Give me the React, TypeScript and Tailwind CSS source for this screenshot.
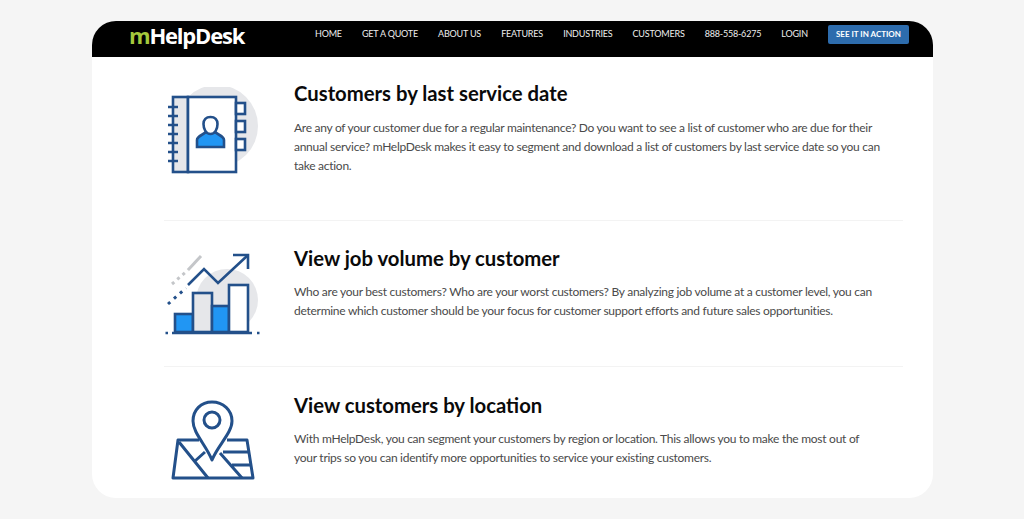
const body = "font-['Lato',sans-serif]";

function AddressBook() {
  return (
    <svg width="100" height="94" viewBox="0 0 100 94" fill="none" stroke="#23508a" strokeWidth="2.6">
      <circle cx="53" cy="39" r="41" fill="#e6e7ea" stroke="none" />
      <rect x="9" y="10" width="15" height="75" fill="#e6e7ea" />
      <rect x="24" y="10" width="48" height="75" fill="#fff" />
      <rect x="72" y="16" width="9" height="11" fill="#fff" />
      <rect x="72" y="34" width="9" height="11" fill="#fff" />
      <rect x="72" y="52" width="9" height="11" fill="#fff" />
      {[20, 29, 38, 47, 56, 65, 74].map((y) => (
        <path key={y} d={`M4 ${y}H14`} />
      ))}
      <path d="M33 60V53C33 49 39 48 42 45H51C54 48 60 49 60 53V60Z" fill="#2196f3" />
      <path d="M46.500 30C42 30 39.500 33 39.500 37C39.500 42 42 47 46.500 47C51 47 53.500 42 53.500 37C53.500 33 51 30 46.500 30Z" fill="#fff" />
    </svg>
  );
}

function Chart() {
  return (
    <svg width="100" height="94" viewBox="0 0 100 94" fill="none" stroke="#23508a" strokeWidth="2.6">
      <circle cx="63" cy="55" r="31" fill="#e6e7ea" stroke="none" />
      <path d="M4 59L22 43" strokeDasharray="3 5" strokeWidth="3" />
      <path d="M8 39L24 25" stroke="#c4c6c9" strokeWidth="3" strokeDasharray="3 4" />
      <path d="M24 25L37 11" stroke="#c4c6c9" strokeWidth="3" />
      <path d="M24 40L40 24L54 38L83 11" />
      <path d="M69 10H84V24" />
      <rect x="11" y="69" width="18" height="18" fill="#2196f3" />
      <rect x="29" y="48" width="19" height="39" fill="#e6e7ea" />
      <rect x="48" y="61" width="17" height="26" fill="#2196f3" />
      <rect x="65" y="40" width="19" height="47" fill="#fff" />
      <path d="M8 88H88" />
      <path d="M1.500 88H4M93 88H95.500" />
    </svg>
  );
}

function MapPin() {
  return (
    <svg width="100" height="94" viewBox="0 0 100 94" fill="none" stroke="#23508a" strokeWidth="3" strokeLinejoin="round">
      <path d="M35 49H14L9 87H89L83 49H63" />
      <path d="M15 51L44 87M31 70L41 61" />
      <path d="M56 62L78 87M59 61H85M68 74H86" />
      <path d="M48 69C42 54 29 42 29 30C29 19 37 11 48 11C59 11 68 19 68 30C68 42 54 54 48 69Z" fill="#fff" />
      <circle cx="48" cy="29" r="8" />
    </svg>
  );
}

const rows = [
  {
    icon: <AddressBook />,
    title: "Customers by last service date",
    text: "Are any of your customer due for a regular maintenance? Do you want to see a list of customer who are due for their annual service? mHelpDesk makes it easy to segment and download a list of customers by last service date so you can take action.",
    cls: "h-[164px] pt-[23px]",
    ic: "mt-[7px]",
    pm: "mt-[12px]",
  },
  {
    icon: <Chart />,
    title: "View job volume by customer",
    text: "Who are your best customers? Who are your worst customers? By analyzing job volume at a customer level, you can determine which customer should be your focus for customer support efforts and future sales opportunities.",
    cls: "h-[146px] pt-[24px]",
    ic: "mt-0",
    pm: "mt-[11px]",
  },
  {
    icon: <MapPin />,
    title: "View customers by location",
    text: "With mHelpDesk, you can segment your customers by region or location. This allows you to make the most out of your trips so you can identify more opportunities to service your existing customers.",
    cls: "h-[131px] pt-[25px]",
    ic: "-mt-[1px]",
    pm: "mt-[11px]",
  },
];

const nav = ["HOME", "GET A QUOTE", "ABOUT US", "FEATURES", "INDUSTRIES", "CUSTOMERS", "888-558-6275", "LOGIN"];

export default function App() {
  return (
    <div className={`h-[519px] w-[1024px] overflow-hidden bg-[#f5f5f5] pt-[21px] pl-[92px] ${body}`}>
      <div className="h-[477px] w-[841px] overflow-hidden rounded-[24px] bg-white">
        <header className="flex h-[36px] items-center bg-black pr-[24px] pl-[37px]">
          <div className="mb-[9px] shrink-0 font-['Open_Sans',sans-serif] text-[22px] leading-none font-bold tracking-[-1.200px] text-white">
            <span className="text-[#a4c83c]">m</span>HelpDesk
          </div>
          <nav className="mb-[10px] ml-auto flex w-[594px] items-center justify-between whitespace-nowrap text-[9px] tracking-[-0.200px] text-[#eeeeee]">
            {nav.map((n) => (
              <span key={n}>{n}</span>
            ))}
            <span className="flex h-[19px] w-[81px] items-center justify-center rounded-[2px] bg-[#2d6cad] text-[8px] font-bold tracking-normal text-white">
              SEE IT IN ACTION
            </span>
          </nav>
        </header>
        <main className="mx-[72px] w-[739px]">
          {rows.map((r, i) => (
            <section key={r.title} className={`flex ${r.cls} ${i < 2 ? "border-b border-[#f3f3f3]" : ""}`}>
              <div className={`w-[130px] shrink-0 ${r.ic}`}>{r.icon}</div>
              <div className="w-[588px]">
                <h2 className="text-[20.300px] leading-[26px] font-bold text-[#0a0a0a]">{r.title}</h2>
                <p className={`${r.pm} text-[12px] leading-[19px] tracking-[-0.270px] text-[#4a4a4a]`}>{r.text}</p>
              </div>
            </section>
          ))}
        </main>
      </div>
    </div>
  );
}
